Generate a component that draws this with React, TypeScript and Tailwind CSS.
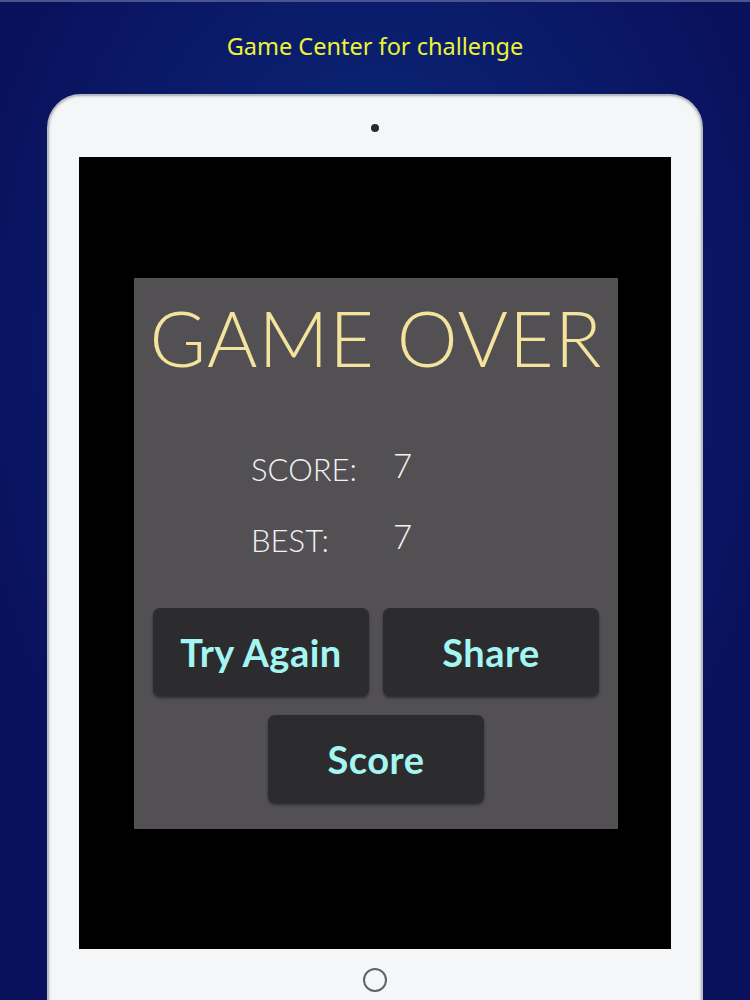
const GameButton = ({ label, className = '' }: { label: string; className?: string }) => (
  <div
    className={`flex h-[88px] w-[216px] items-center justify-center rounded-[7px] bg-[#2c2b2e] shadow-[0_2px_3px_rgba(0,0,0,0.45)] ${className}`}
  >
    <span className="font-['Lato',sans-serif] text-[38px] font-bold tracking-[0.5px] text-[#a4f6f3]">
      {label}
    </span>
  </div>
);

const StatRow = ({ label, value }: { label: string; value: string }) => (
  <div className="flex items-end">
    <span className="w-[142px] font-['Lato',sans-serif] text-[31px] font-light leading-none text-[#f2f2f2]">
      {label}
    </span>
    <span className="mb-[3px] font-['Lato',sans-serif] text-[33px] font-light leading-none text-[#f2f2f2]">
      {value}
    </span>
  </div>
);

export default function App() {
  return (
    <div className="relative h-[1000px] w-[750px] overflow-hidden border-t-2 border-[#4a5290] bg-[radial-gradient(ellipse_55%_60%_at_50%_35%,#0b3283_0%,#0a1d6c_55%,#0a115c_100%)]">
      <div className="flex h-[90px] items-center justify-center pb-[1px]">
        <h1 className="font-['Noto_Sans',sans-serif] text-[23.5px] text-[#eef233]">
          Game Center for challenge
        </h1>
      </div>

      {/* tablet */}
      <div className="mx-auto mt-[2px] h-[960px] w-[656px] rounded-[34px] border-[2px] border-[#b9bcc4] bg-[#f5f6f8] shadow-[inset_0_0_3px_rgba(0,0,0,0.25)]">
        <div className="flex h-[61px] items-center justify-center pt-[2px]">
          <div className="h-[8px] w-[8px] rounded-full bg-[#262a33]" />
        </div>
        <div className="mx-auto flex h-[792px] w-[592px] flex-col bg-black pl-[55px] pt-[121px]">
          <div className="flex h-[551px] w-[484px] flex-col bg-[#525053]">
            <div className="flex h-[130px] items-center justify-center pb-[12px]">
              <span className="font-['Lato',sans-serif] text-[77px] font-light leading-none tracking-[1px] text-[#f3e39c]">
                GAME OVER
              </span>
            </div>
            <div className="flex flex-col gap-[35px] pl-[117px] pt-[41px]">
              <StatRow label="SCORE:" value="7" />
              <StatRow label="BEST:" value="7" />
            </div>
            <div className="mt-[52px] flex flex-col items-center gap-[19px] px-[19px]">
              <div className="flex w-full justify-between">
                <GameButton label="Try Again" />
                <GameButton label="Share" />
              </div>
              <GameButton label="Score" />
            </div>
          </div>
        </div>
        <div className="flex justify-center pt-[19px]">
          <div className="h-[24px] w-[24px] rounded-full border-[2px] border-[#5f636b] bg-[#f5f6f8]" />
        </div>
      </div>
    </div>
  );
}
